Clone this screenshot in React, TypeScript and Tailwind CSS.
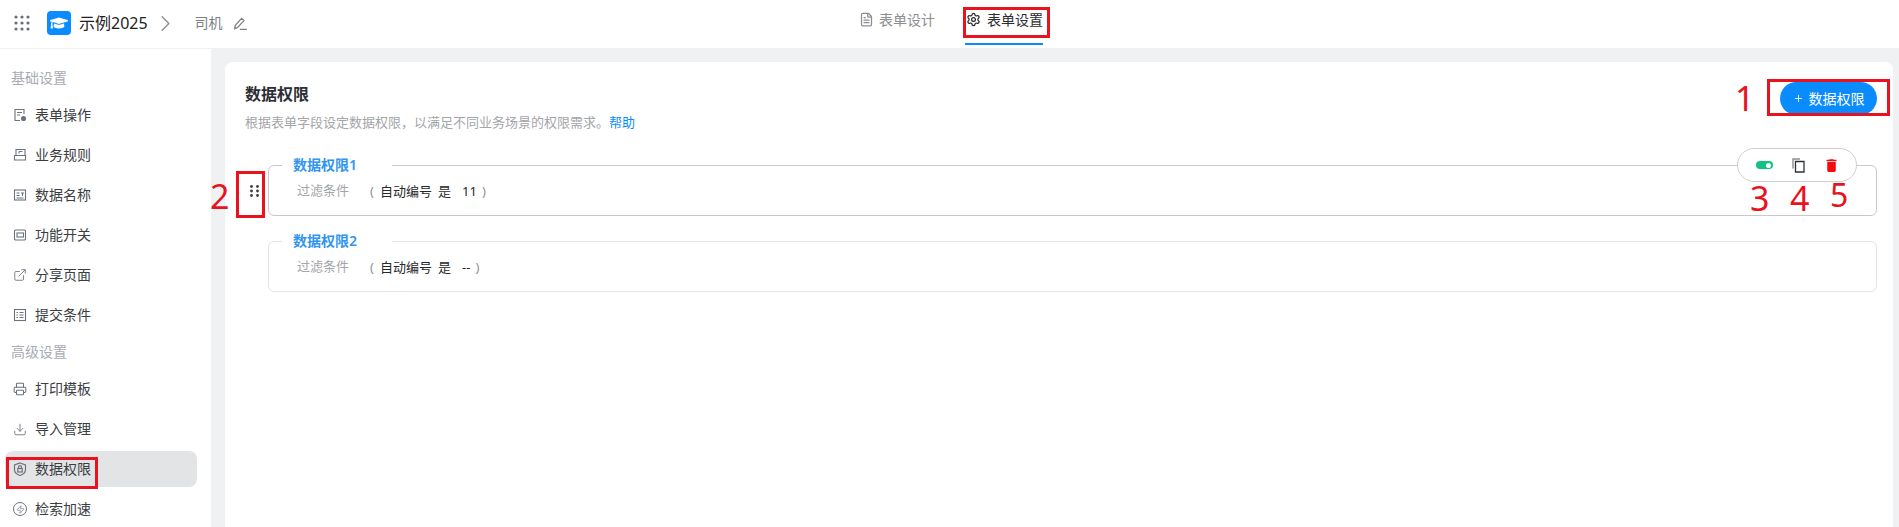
import { ChevronRight, Download, ExternalLink, FileText, Plus, Printer, Settings, Zap } from "lucide-react";
import type { ReactNode } from "react";
import { FaGraduationCap } from "react-icons/fa";
import { MdDelete } from "react-icons/md";

const BoxIcon = ({ children }: { children: ReactNode }) => (
    <svg width="14" height="14" viewBox="0 0 14 14" fill="none" stroke="#6b7280" strokeWidth="1.1">
        {children}
    </svg>
);

const basicItems = [
    {
        label: "表单操作",
        icon: (
            <BoxIcon>
                <path d="M11 6V1.5H2v11h5M4 4.5h5M4 7h3" />
                <circle cx="10.5" cy="10.5" r="2" fill="#6b7280" />
            </BoxIcon>
        ),
    },
    {
        label: "业务规则",
        icon: (
            <BoxIcon>
                <path d="M3 7V1.5h9V7M1.5 7.5h11v4.5h-11zM6 3.5h3.5M6 5.5V3.5" />
            </BoxIcon>
        ),
    },
    {
        label: "数据名称",
        icon: (
            <BoxIcon>
                <rect x="1.5" y="2" width="11" height="10" />
                <path d="M3.5 5h3M3.5 7.5h3M3.5 10h7M8 5h3M9.5 5v3" />
            </BoxIcon>
        ),
    },
    {
        label: "功能开关",
        icon: (
            <BoxIcon>
                <rect x="1.5" y="2" width="11" height="10" rx="1" />
                <rect x="4" y="5" width="6.5" height="4" />
            </BoxIcon>
        ),
    },
    { label: "分享页面", icon: <ExternalLink size={14} color="#6b7280" strokeWidth={1.5} /> },
    {
        label: "提交条件",
        icon: (
            <BoxIcon>
                <rect x="1.5" y="1.5" width="11" height="11" />
                <path d="M3.5 4.5h1.5M6.5 4.5h4M3.5 7h1.5M6.5 7h4M3.5 9.5h1.5M6.5 9.5h4" />
            </BoxIcon>
        ),
    },
];

const advancedItems = [
    { label: "打印模板", icon: <Printer size={14} color="#6b7280" strokeWidth={1.8} /> },
    { label: "导入管理", icon: <Download size={15} color="#6b7280" strokeWidth={1.5} /> },
    {
        label: "数据权限",
        active: true,
        icon: (
            <svg width="14" height="14" viewBox="0 0 14 14" fill="none" stroke="#6b7280" strokeWidth="1.2">
                <path d="M7 1 12.5 3v4.5C12.5 10.5 10 12.5 7 13.5 4 12.5 1.5 10.5 1.5 7.5V3z" />
                <rect x="4.8" y="6.5" width="4.4" height="3.5" />
                <path d="M5.5 6.5V5.2a1.5 1.5 0 0 1 3 0v1.3" />
            </svg>
        ),
    },
    {
        label: "检索加速",
        icon: (
            <span className="flex h-[14px] w-[14px] items-center justify-center rounded-full border border-gray-500">
                <Zap size={9} color="#6b7280" strokeWidth={1.8} />
            </span>
        ),
    },
];

const SectionTitle = ({ text }: { text: string }) => (
    <div className="mt-[9px] mb-[9px] pl-[6px] text-sm leading-5 text-[#a8abb2]">{text}</div>
);

const SideItem = ({ label, icon, active }: { label: string; icon: ReactNode; active?: boolean }) => (
    <div
        className={`mb-1 flex h-9 w-[192px] items-center gap-2 rounded-lg pl-2 text-sm text-[#3a3d42] ${
            active ? "bg-[#e3e4e6]" : ""
        }`}
    >
        <span className="flex w-[14px] justify-center">{icon}</span>
        {label}
    </div>
);

const RuleCard = ({ title, value, strong }: { title: string; value: string; strong?: boolean }) => (
    <fieldset
        className={`h-[61px] flex-1 rounded-md border px-0 ${strong ? "border-[#c9c9c9]" : "border-[#e4e5e7]"}`}
    >
        <legend className="ml-[13px] h-5 w-[110px] pl-[11px] text-sm leading-5 font-semibold text-[#2f95f0]">
            {title}
        </legend>
        <div className="flex pt-[5px] pl-[28px] text-[13px] leading-[22px] text-[#26282c]">
            <span className="-mt-px w-[73px] text-[#a3a5a9]">过滤条件</span>
            <span className="w-[10px] text-[#8f9196]">(</span>
            <span className="w-[58px]">自动编号</span>
            <span className="w-[24px]">是</span>
            <span>{value}</span>
            <span className="ml-[5px] text-[#8f9196]">)</span>
        </div>
    </fieldset>
);

const Mark = ({ className }: { className: string }) => (
    <div className={`absolute border-[3px] border-[#e8131f] ${className}`} />
);

const Num = ({ className, children }: { className: string; children: ReactNode }) => (
    <div className={`absolute leading-none text-[#e8131f] ${className}`}>{children}</div>
);

export default function App() {
    return (
        <div
            className="relative flex h-[527px] w-[1899px] flex-col overflow-hidden bg-[#f0f1f3]"
            style={{ fontFamily: '"Noto Sans", "Noto Sans CJK SC", sans-serif' }}
        >
            <header className="relative flex h-[49px] shrink-0 items-center border-b border-[#eff0f2] bg-white pb-[2px]">
                <svg className="ml-[14px]" width="16" height="16" viewBox="0 0 16 16" fill="#6b6f76">
                    {[2, 8, 14].map((y) =>
                        [2, 8, 14].map((x) => <circle key={`${x}-${y}`} cx={x} cy={y} r="1.6" />),
                    )}
                </svg>
                <div className="ml-[17px] flex h-6 w-6 items-center justify-center rounded bg-[#0a8cff]">
                    <FaGraduationCap size={18} color="#ffffff" />
                </div>
                <span className="ml-2 text-base text-[#1f2023]">示例2025</span>
                <ChevronRight className="ml-[4px]" size={27} color="#8b8d91" strokeWidth={1.2} />
                <span className="ml-4 text-sm text-[#7d7f84]">司机</span>
                <svg className="ml-[10px]" width="15" height="15" viewBox="0 0 13 13" fill="none" stroke="#7d7f84" strokeWidth="1.1">
                    <path d="M1.5 11 2 8l5.5-6 2 2L4 10zM6 11.5h6" />
                </svg>
                <div className="absolute top-0 left-[859px] flex h-[45px]">
                    <div className="flex h-[39px] items-center gap-[5px] text-sm text-[#8b8d91]">
                        <FileText size={15} color="#8b8d91" />
                        表单设计
                    </div>
                    <div className="ml-[30px] flex h-[45px] w-[78px] flex-col border-b-2 border-[#0a8cff]">
                        <div className="flex h-[39px] items-center gap-[6px] pl-[1px] text-sm text-[#2a2c30]">
                            <Settings size={15} color="#2a2c30" />
                            表单设置
                        </div>
                    </div>
                </div>
            </header>

            <div className="flex min-h-0 flex-1">
                <aside className="w-[211px] bg-white pt-[10px] pl-[5px]">
                    <SectionTitle text="基础设置" />
                    {basicItems.map((item) => (
                        <SideItem key={item.label} label={item.label} icon={item.icon} />
                    ))}
                    <SectionTitle text="高级设置" />
                    {advancedItems.map((item) => (
                        <SideItem key={item.label} label={item.label} icon={item.icon} active={item.active} />
                    ))}
                </aside>

                <main className="mt-[13px] mr-[6px] ml-[14px] flex-1 rounded-t-lg bg-white pt-5 pr-4 pl-5">
                    <div className="flex justify-between">
                        <div>
                            <h1 className="text-base leading-6 font-bold text-[#2c2e33]">数据权限</h1>
                            <p className="mt-[6px] text-[13px] leading-5 text-[#a3a5a9]">
                                根据表单字段设定数据权限，以满足不同业务场景的权限需求。
                                <span className="text-[#0a8cff]">帮助</span>
                            </p>
                        </div>
                        <button className="flex h-[33px] w-[97px] items-center justify-center gap-[5px] rounded-full bg-[#0a8cff] text-sm text-white">
                            <Plus size={11} strokeWidth={1.8} />
                            数据权限
                        </button>
                    </div>

                    <div className="relative mt-[23px] flex">
                        <div className="w-[23px] pt-[30px] pl-[5px]">
                            <svg width="9" height="12" viewBox="0 0 9 12" fill="#3a3d42">
                                {[1.5, 6, 10.5].map((y) =>
                                    [1.5, 7.5].map((x) => <circle key={`${x}-${y}`} cx={x} cy={y} r="1.4" />),
                                )}
                            </svg>
                        </div>
                        <RuleCard title="数据权限1" value="11" strong />
                        <div className="absolute top-[-7px] right-5 flex h-[34px] w-[120px] items-center rounded-full border border-[#cfcfcf] bg-white pl-[18px]">
                            <span className="flex h-2 w-[17px] items-center justify-end rounded-full bg-[#12c282] pr-[2px]">
                                <span className="h-[5px] w-[5px] rounded-full bg-white" />
                            </span>
                            <svg className="ml-[19px]" width="13" height="15" viewBox="0 0 13 15" fill="none">
                                <path d="M1 10.5V1h7" stroke="#8a8d92" strokeWidth="1.4" />
                                <path d="M3.5 3.5H12v10.5H3.5z" fill="#ffffff" stroke="#2f3338" strokeWidth="1.3" />
                            </svg>
                            <MdDelete className="ml-[18px]" size={17} color="#f50b0b" />
                        </div>
                    </div>

                    <div className="mt-[15px] flex">
                        <div className="w-[23px]" />
                        <RuleCard title="数据权限2" value="--" />
                    </div>
                </main>
            </div>

            {/* red markup drawn over the screenshot */}
            <Mark className="top-[7px] left-[963px] h-[31px] w-[87px]" />
            <Mark className="top-[79px] left-[1767px] h-[37px] w-[123px]" />
            <Mark className="top-[171px] left-[236px] h-[47px] w-[29px]" />
            <Mark className="top-[457px] left-[6px] h-[32px] w-[92px]" />
            <Num className="top-[81px] left-[1735px] text-[34px]">1</Num>
            <Num className="top-[179px] left-[210px] text-[34px]">2</Num>
            <Num className="top-[181px] left-[1750px] text-[34px]">3</Num>
            <Num className="top-[181px] left-[1790px] text-[34px]">4</Num>
            <Num className="top-[179px] left-[1830px] text-[32px]">5</Num>
        </div>
    );
}
